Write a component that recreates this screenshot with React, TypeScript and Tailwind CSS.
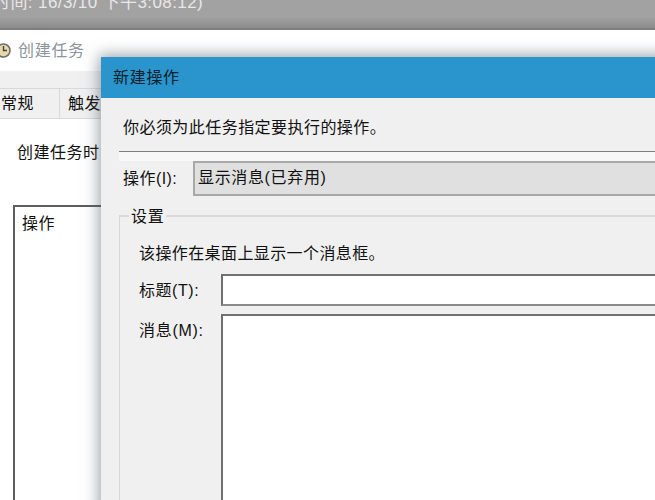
export default function App() {
  return (
    <div className="relative w-[655px] h-[500px] overflow-hidden bg-white text-[16px] leading-[22px] text-[#111] font-['Liberation_Sans','Noto_Sans_CJK_SC',sans-serif]">
      <div className="h-[30px] border-b-2 border-[#7c7c7c] bg-gradient-to-b from-[#a2a2a2] from-60% to-[#8c8c8c] overflow-hidden">
        <div className="-mt-[8px] -ml-[7px] text-[#e8e8e8] text-[17px] whitespace-nowrap tracking-[0.4px]">时间: 16/3/10 下午3:08:12)</div>
      </div>
      <div className="h-[41px] flex items-center gap-[7px] -ml-[4px] bg-white text-[#8a949c] tracking-[0.7px]">
        <svg width="15" height="17" viewBox="0 0 15 17" className="shrink-0">
          <circle cx="7.5" cy="8.5" r="6.5" fill="#e8d9a8" stroke="#6d6d6d" strokeWidth="1.6" />
          <path d="M7.5 4v4.500h3.500" fill="none" stroke="#444" strokeWidth="1.4" />
        </svg>
        <span>创建任务</span>
      </div>
      <div className="h-[48px] pt-[17px] bg-[#f0f0f0] border-b border-[#d9d9d9] flex">
        <div className="w-[60px] h-[31px] border-r border-t border-[#d9d9d9] pl-[1px] flex items-center tracking-[0.5px]">常规</div>
        <div className="w-[60px] h-[31px] border-t border-[#d9d9d9] pl-[8px] flex items-center tracking-[0.4px]">触发器</div>
      </div>
      <div className="bg-white pt-[23px]">
        <div className="pl-[17px] tracking-[0.5px]">创建任务时</div>
        <div className="ml-[13px] mt-[41px] h-[300px] border-2 border-[#5e5e5e] pl-[7px] pt-[6px] tracking-[0.4px]">操作</div>
      </div>

      <div className="absolute left-[101px] top-[57px] w-[600px] h-[460px] bg-[#f0f0f0] shadow-[-2px_-2px_14px_rgba(70,80,95,0.55)]">
        <div className="h-[41px] bg-[#2a94cc] pl-[12px] flex items-center text-[#10202a] tracking-[0.7px]">新建操作</div>
        <div className="pl-[18px] pt-[3px]">
          <div className="pl-[4px] pt-[16px] h-[50px] tracking-[0.45px]">你必须为此任务指定要执行的操作。</div>
          <div className="border-t border-t-[#7f7f7f] bg-[#f8f8f8] h-[10px]" />
          <div className="flex items-center h-[34px]">
            <div className="w-[74px] pl-[4px] pt-[2px] tracking-[0.45px]">操作(I):</div>
            <div className="flex-1 h-[35px] bg-[#e0e0e0] border-2 border-[#a8a8a8] pl-[3px] flex items-center tracking-[0.65px]">显示消息(已弃用)</div>
          </div>
          <div className="relative mt-[20px] border-l border-t-2 border-[#d8d8d8] h-[300px] pl-[19px]">
            <div className="absolute left-[9px] -top-[11px] bg-[#f0f0f0] px-[2px] tracking-[0.7px]">设置</div>
            <div className="pt-[26px] h-[57px] tracking-[0.4px]">该操作在桌面上显示一个消息框。</div>
            <div className="flex h-[32px]">
              <div className="w-[82px] pt-[6px] tracking-[0.55px]">标题(T):</div>
              <div className="flex-1 bg-white border-2 border-[#707070] border-b-[#8a8a8a]" />
            </div>
            <div className="flex mt-[8px] h-[300px]">
              <div className="w-[82px] pt-[6px] tracking-[0.7px]">消息(M):</div>
              <div className="flex-1 bg-white border-2 border-[#707070]" />
            </div>
          </div>
        </div>
      </div>
    </div>
  );
}
